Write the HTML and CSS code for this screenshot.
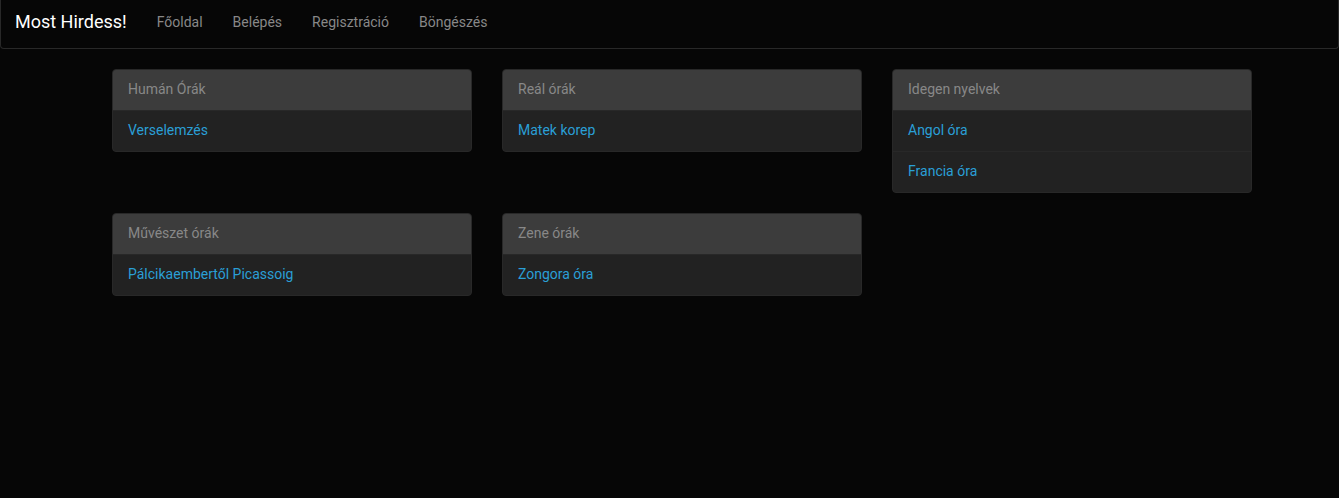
FILE: index.html
```
<!DOCTYPE html>
<html lang="hu">
<head>
<meta charset="utf-8">
<title>Most Hirdess!</title>
<link rel="stylesheet" href="styles.css">
</head>
<body>
<nav class="navbar">
  <a class="brand" href="#">Most Hirdess!</a>
  <ul class="nav">
    <li><a href="#">Főoldal</a></li>
    <li><a href="#">Belépés</a></li>
    <li><a href="#">Regisztráció</a></li>
    <li><a href="#">Böngészés</a></li>
  </ul>
</nav>
<main class="content">
  <div class="row">
    <div class="panel">
      <div class="panel-heading">Humán Órák</div>
      <ul class="list">
        <li><a href="#">Verselemzés</a></li>
      </ul>
    </div>
    <div class="panel">
      <div class="panel-heading">Reál órák</div>
      <ul class="list">
        <li><a href="#">Matek korep</a></li>
      </ul>
    </div>
    <div class="panel">
      <div class="panel-heading">Idegen nyelvek</div>
      <ul class="list">
        <li><a href="#">Angol óra</a></li>
        <li><a href="#">Francia óra</a></li>
      </ul>
    </div>
  </div>
  <div class="row">
    <div class="panel">
      <div class="panel-heading">Művészet órák</div>
      <ul class="list">
        <li><a href="#">Pálcikaembertől Picassoig</a></li>
      </ul>
    </div>
    <div class="panel">
      <div class="panel-heading">Zene órák</div>
      <ul class="list">
        <li><a href="#">Zongora óra</a></li>
      </ul>
    </div>
  </div>
</main>
</body>
</html>
```
FILE: styles.css
```
* { box-sizing: border-box; }
html, body {
  margin: 0;
  padding: 0;
  background: #060606;
  font-family: Roboto, "Liberation Sans", Arial, sans-serif;
  font-size: 14px;
  line-height: 20px;
  color: #888;
}
a { text-decoration: none; }
.navbar {
  display: flex;
  align-items: center;
  height: 49px;
  border: 1px solid #282828;
  border-top: none;
  border-radius: 0 0 4px 4px;
  background: #060606;
  padding: 0 0 0 14px;
}
.brand {
  color: #fff;
  font-size: 18px;
  line-height: 20px;
  margin-right: 15px;
  padding-bottom: 4px;
}
.nav {
  display: flex;
  list-style: none;
  margin: 0;
  padding: 0 0 4px 0;
}
.nav a {
  display: block;
  color: #888;
  padding: 0 15px;
}
.content {
  padding: 20px 0 0 112px;
}
.row {
  display: flex;
  align-items: flex-start;
  gap: 30px;
  margin-bottom: 20px;
}
.panel {
  width: 360px;
  background: #222;
  border: 1px solid #282828;
  border-radius: 4px;
  overflow: hidden;
}
.panel-heading {
  background: #3c3c3c;
  color: #888;
  padding: 9px 15px 11px;
  border-bottom: 1px solid #282828;
}
.list {
  list-style: none;
  margin: 0;
  padding: 0;
}
.list li {
  padding: 9px 15px 11px;
  border-top: 1px solid #282828;
}
.list li:first-child { border-top: none; }
.list a { color: #2a9fd6; }
```
